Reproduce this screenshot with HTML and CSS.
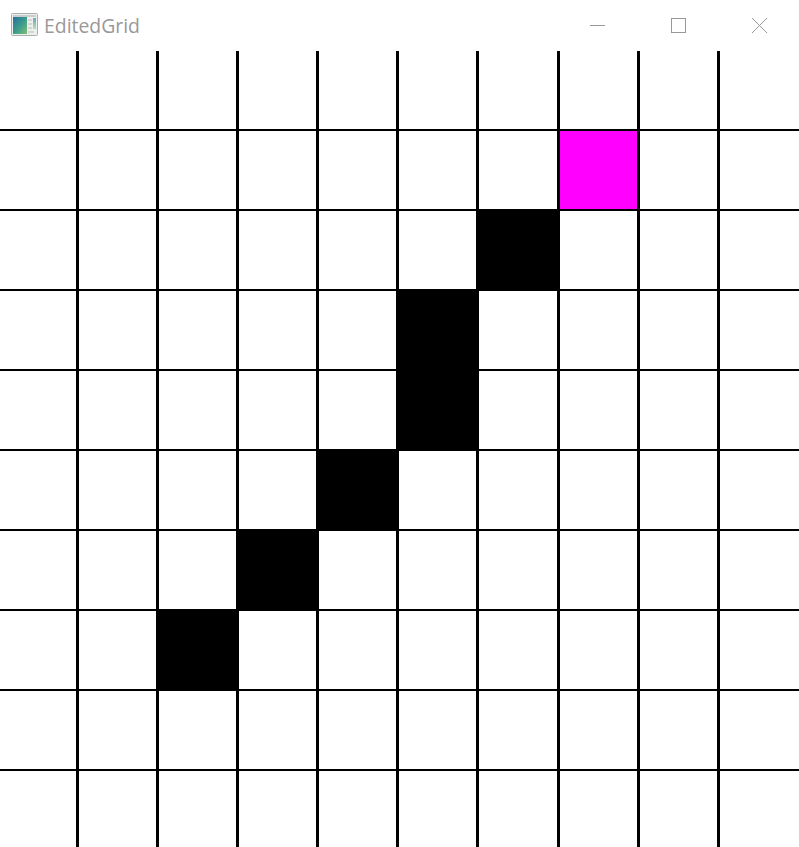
FILE: index.html
```html
<!DOCTYPE html>
<html lang="en">
<head>
  <meta charset="UTF-8">
  <title>EditedGrid</title>
  <link rel="stylesheet" href="styles.css">
</head>
<body>
  <!-- Title bar -->
  <div class="titlebar">
    <svg class="app-icon" width="27" height="23" viewBox="0 0 27 23">
      <defs>
        <linearGradient id="pane" x1="0" y1="0" x2="1" y2="1">
          <stop offset="0" stop-color="#2a6ea0"/>
          <stop offset="0.5" stop-color="#3a9a8c"/>
          <stop offset="1" stop-color="#7cc07a"/>
        </linearGradient>
        <linearGradient id="strip" x1="0" y1="0" x2="0" y2="1">
          <stop offset="0" stop-color="#6fa5c0"/>
          <stop offset="1" stop-color="#b8dfb8"/>
        </linearGradient>
      </defs>
      <rect x="0.5" y="0.5" width="26" height="22" rx="1" fill="#eef0ee" stroke="#a9aeb0"/>
      <rect x="2" y="2" width="23" height="2" fill="#c9cccc"/>
      <rect x="2" y="4" width="14" height="17" fill="url(#pane)"/>
      <rect x="17" y="6" width="4" height="2" fill="#d4d6d4"/>
      <rect x="17" y="10" width="4" height="2" fill="#d4d6d4"/>
      <rect x="17" y="14" width="4" height="2" fill="#d4d6d4"/>
      <rect x="17" y="18" width="6" height="2" fill="#d4d6d4"/>
      <rect x="22" y="5" width="3" height="11" fill="url(#strip)"/>
    </svg>
    <span class="title">EditedGrid</span>
    <div class="controls">
      <svg width="16" height="16" viewBox="0 0 16 16"><path d="M0 7.5H15" stroke="#999" fill="none"/></svg>
      <svg width="16" height="16" viewBox="0 0 16 16"><rect x="0.5" y="0.5" width="14" height="14" stroke="#999" fill="none"/></svg>
      <svg width="16" height="16" viewBox="0 0 16 16"><path d="M0 0L15 15M15 0L0 15" stroke="#999" fill="none"/></svg>
    </div>
  </div>

  <!-- Grid, 10 x 10 -->
  <div class="grid">
    <div></div><div></div><div></div><div></div><div></div><div></div><div></div><div></div><div></div><div></div>
    <div></div><div></div><div></div><div></div><div></div><div></div><div></div><div class="goal"></div><div></div><div></div>
    <div></div><div></div><div></div><div></div><div></div><div></div><div class="wall"></div><div></div><div></div><div></div>
    <div></div><div></div><div></div><div></div><div></div><div class="wall"></div><div></div><div></div><div></div><div></div>
    <div></div><div></div><div></div><div></div><div></div><div class="wall"></div><div></div><div></div><div></div><div></div>
    <div></div><div></div><div></div><div></div><div class="wall"></div><div></div><div></div><div></div><div></div><div></div>
    <div></div><div></div><div></div><div class="wall"></div><div></div><div></div><div></div><div></div><div></div><div></div>
    <div></div><div></div><div class="wall"></div><div></div><div></div><div></div><div></div><div></div><div></div><div></div>
    <div></div><div></div><div></div><div></div><div></div><div></div><div></div><div></div><div></div><div></div>
    <div></div><div></div><div></div><div></div><div></div><div></div><div></div><div></div><div></div><div></div>
  </div>
</body>
</html>
```

FILE: styles.css
```css
html, body {
  margin: 0;
  height: 100%;
  overflow: hidden;
  background-color: #fff;
}
.titlebar {
  display: flex;
  align-items: center;
  height: 51px;
  padding-left: 11px;
  box-sizing: border-box;
}
.app-icon {
  margin-top: -2px;
}
.title {
  margin-left: 6px;
  font-family: "Open Sans", sans-serif;
  font-size: 19.4px;
  color: #999;
}
.controls {
  display: flex;
  gap: 65px;
  margin-left: auto;
  margin-right: 31px;
  margin-top: 1px;
}
.grid {
  display: grid;
  grid-template-columns: 79px repeat(5, 80px) 81px 80px 80px 79px;
  grid-template-rows: repeat(9, 80px) 76px;
}
.grid div {
  border-right: 3px solid #000;
  border-bottom: 2px solid #000;
}
.grid div:nth-child(10n) {
  border-right: none;
}
.grid div:nth-child(n+91) {
  border-bottom: none;
}
.grid .wall {
  background-color: #000;
  box-shadow: -3px -2px 0 #000;
}
.grid .goal {
  background-color: #f0f;
}
```
